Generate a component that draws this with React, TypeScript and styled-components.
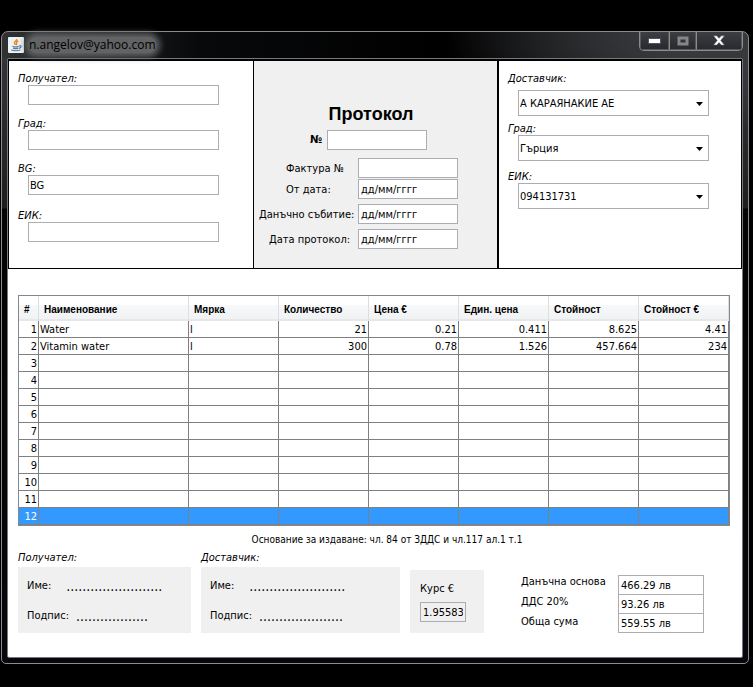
import React from "react";
import styled, { createGlobalStyle, css } from "styled-components";

const Global = createGlobalStyle`
  *, *::before, *::after { box-sizing: border-box; }
  body {
    margin: 0;
    background: #000;
    color: #000;
    font: 11px/14px "DejaVu Sans Condensed", "Noto Sans", sans-serif;
  }
  input, select, button { font: inherit; color: inherit; margin: 0; }
`;

const Desktop = styled.main`
  min-height: 100vh;
  padding: 31px 4px 20px 1px;
  background: #000;
`;

const Frame = styled.section`
  border: 1px solid #8c8c8c;
  border-radius: 7px 7px 5px 5px;
  padding: 0 5px 5px;
  background:
    radial-gradient(ellipse 300px 100px at 100% 0, #38393c 30%, transparent 100%),
    linear-gradient(90deg, #303133 0, #08090b 200px, #000 440px, #17181a 600px, #303133 100%) top / 100% 26px no-repeat,
    linear-gradient(#37383b 0, #1d1e20 176px, #030405 177px, #05070a 100%);
`;

const TitleBar = styled.header`
  display: flex;
  justify-content: space-between;
  height: 26px;
  padding-left: 1px;
`;

const Caption = styled.h1`
  display: flex;
  align-items: center;
  gap: 5px;
  margin: 0;
  font: 12px/16px "Open Sans", sans-serif;
`;

const CaptionText = styled.span`
  border-radius: 8px;
  background: #626364;
  box-shadow: 0 0 6px 4px #626364;
`;

const WindowButtons = styled.div`
  display: flex;
  height: 19px;
  border: 1px solid #8b8c8e;
  border-top: 0;
  border-radius: 0 0 5px 5px;
  overflow: hidden;
`;

const WindowButton = styled.button<{ $width: number }>`
  display: grid;
  place-items: center;
  width: ${(p) => p.$width}px;
  padding: 0;
  border: 1px solid #56585b;
  border-top: 0;
  background: linear-gradient(#3d3e41, #292a2d);
  & + & { border-left-color: #8b8c8e; }
`;

const Client = styled.div`
  border: 1px solid #77787a;
  border-radius: 2px;
  background: #fff;
  padding-bottom: 24px;
`;

const Panels = styled.div`
  display: grid;
  grid-template-columns: 244fr 246fr 242fr;
  border: solid #000;
  border-width: 2px 1px 1px;
`;

const Panel = styled.section<{ $shaded?: boolean }>`
  min-height: 207px;
  padding: 10px 9px;
  ${(p) =>
    p.$shaded &&
    css`
      padding: 42px 0 0;
      background: #f0f0f0;
      border: solid #000;
      border-width: 0 2px 0 1px;
    `}
`;

const Field = styled.div<{ $before?: number }>`
  margin-top: ${(p) => p.$before ?? 0}px;
`;

const ItalicLabel = styled.label<{ $after?: number }>`
  display: block;
  height: 14px;
  line-height: 16px;
  margin-bottom: ${(p) => p.$after ?? 0}px;
  font-style: italic;
`;

const box = css`
  border: 1px solid #abadb3;
  border-radius: 0;
  background: #fff;
  outline: none;
`;

const TextBox = styled.input`
  ${box}
  height: 20px;
  width: 100px;
  padding: 0 2px;
`;

const WideTextBox = styled(TextBox)`
  display: block;
  width: 191px;
  max-width: calc(100% - 10px);
  margin-left: 10px;
  padding: 0 1px;
`;

const SelectWrap = styled.div`
  position: relative;
  width: 191px;
  max-width: calc(100% - 10px);
  margin-left: 10px;
`;

const Select = styled.select`
  ${box}
  display: block;
  appearance: none;
  width: 100%;
  height: 26px;
  padding: 1px 20px 0 1px;
`;

const Arrow = styled.svg`
  position: absolute;
  right: 6px;
  top: 12px;
  pointer-events: none;
`;

const Title = styled.h2`
  margin: 0 0 5px;
  padding-right: 9px;
  text-align: center;
  font: bold 18px/22px "Liberation Sans", sans-serif;
`;

const NumberRow = styled.div`
  display: flex;
  align-items: center;
  gap: 5px;
  padding-left: 56px;
  margin-bottom: 8px;
  font-weight: bold;
`;

const DateRow = styled.div<{ $indent: number; $after: number }>`
  display: grid;
  grid-template-columns: ${(p) => 104 - p.$indent}px 100px;
  align-items: center;
  padding-left: ${(p) => p.$indent}px;
  margin-bottom: ${(p) => p.$after}px;
  white-space: nowrap;
  label { padding-top: 2px; }
`;

const Body = styled.div`
  padding: 26px 12px 0 10px;
`;

const Table = styled.table`
  width: 100%;
  table-layout: fixed;
  border-collapse: separate;
  border-spacing: 0;
  border: 1px solid #828790;
`;

const HeadCell = styled.th`
  height: 25px;
  padding: 4px 0 0 5px;
  text-align: left;
  font: bold 10px/14px "Liberation Sans", sans-serif;
  white-space: nowrap;
  border-right: 1px solid #dddee0;
  border-bottom: 2px solid #e6e7e9;
  background: linear-gradient(#fff 0 40%, #f7f8fa 41%, #f1f2f4 100%);
`;

const Cell = styled.td<{ $right?: boolean }>`
  height: 17px;
  padding: 2px 1px 0;
  line-height: 14px;
  text-align: ${(p) => (p.$right ? "right" : "left")};
  border: solid #808080;
  border-width: 0 1px 1px 0;
`;

const Row = styled.tr<{ $selected: boolean }>`
  ${(p) => p.$selected && "background: #3399ff; color: #fff;"}
`;

const Note = styled.p`
  margin: 7px 0 4px;
  padding-left: 26px;
  text-align: center;
  font-size: 10px;
`;

const Footer = styled.div`
  display: flex;
  align-items: flex-end;
  gap: 10px;
`;

const Signature = styled.section<{ $grow: number }>`
  flex: ${(p) => p.$grow} 1 0;
`;

const SignatureTitle = styled.h3`
  margin: 0 0 2px;
  font: inherit;
  font-style: italic;
`;

const SignatureBox = styled.div`
  display: grid;
  gap: 16px;
  padding: 12px 9px 10px;
  background: #f0f0f0;
`;

const SignatureLine = styled.div<{ $gap: number }>`
  display: flex;
  gap: ${(p) => p.$gap}px;
`;

const Dots = styled.span`
  font-size: 14px;
  line-height: 14px;
`;

const Rate = styled.div`
  width: 74px;
  padding: 12px 10px 11px;
  background: #f0f0f0;
`;

const RateBox = styled(TextBox)`
  display: block;
  width: 46px;
  margin-top: 6px;
  background: #f0f0f0;
`;

const Totals = styled.div`
  display: flex;
  gap: 13px;
  margin: 0 26px 0 27px;
`;

const TotalLabels = styled.div`
  display: grid;
  align-content: start;
  gap: 6px;
  width: 84px;
  white-space: nowrap;
`;

const TotalBoxes = styled.div`
  display: grid;
`;

const TotalBox = styled(TextBox)`
  width: 86px;
  & + & { height: 19px; border-top: 0; }
`;

const columns = ["#", "Наименование", "Мярка", "Количество", "Цена €", "Един. цена", "Стойност", "Стойност €"];
const items = [
  ["Water", "l", "21", "0.21", "0.411", "8.625", "4.41"],
  ["Vitamin water", "l", "300", "0.78", "1.526", "457.664", "234"],
];
const blank = ["", "", "", "", "", "", ""];
const rows = Array.from({ length: 12 }, (_, i) => items[i] ?? blank);

const recipient = [
  { id: "r-name", label: "Получател:", value: "", before: 0 },
  { id: "r-city", label: "Град:", value: "", before: 11 },
  { id: "r-bg", label: "BG:", value: "BG", before: 11 },
  { id: "r-eik", label: "ЕИК:", value: "", before: 13 },
];
const supplier = [
  { id: "s-name", label: "Доставчик:", value: "А КАРАЯНАКИЕ АЕ", before: 0, after: 5 },
  { id: "s-city", label: "Град:", value: "Гърция", before: 5, after: 0 },
  { id: "s-eik", label: "ЕИК:", value: "094131731", before: 8, after: 0 },
];
const dates = [
  { id: "d-invoice", label: "Фактура №", value: "", indent: 32, after: 1 },
  { id: "d-from", label: "От дата:", value: "дд/мм/гггг", indent: 32, after: 5 },
  { id: "d-event", label: "Данъчно събитие:", value: "дд/мм/гггг", indent: 5, after: 5 },
  { id: "d-protocol", label: "Дата протокол:", value: "дд/мм/гггг", indent: 15, after: 0 },
];
const totals = [
  { id: "t-base", label: "Данъчна основа", value: "466.29 лв" },
  { id: "t-vat", label: "ДДС 20%", value: "93.26 лв" },
  { id: "t-sum", label: "Обща сума", value: "559.55 лв" },
];
const signatures = [
  { title: "Получател:", grow: 173, name: 24, sign: 18 },
  { title: "Доставчик:", grow: 199, name: 24, sign: 21 },
];

function JavaIcon() {
  return (
    <svg width="16" height="16" viewBox="0 0 16 16" fill="none" aria-hidden="true">
      <rect width="16" height="16" rx="1" fill="#eef2f5" />
      <path d="M8.6 2C9.6 3.6 5.8 4.4 6.4 6 6.7 6.8 7.4 7.2 7.4 8M10.4 4C8.8 4.5 7.9 5.2 8.7 6.3 9 6.9 8.6 7.5 8.2 7.9" stroke="#ee8322" strokeWidth="1.4" />
      <path d="M4.4 9.3c1.8.7 4.6.7 6.4 0M5 11.1c1.7.6 3.6.6 5.2 0M3.2 13c2.2 1 7 1 9.2 0M11.2 8.8c2.6-.6 2.4 2-.4 2.6" stroke="#557f9e" strokeWidth="1.2" />
    </svg>
  );
}

export default function App() {
  return (
    <Desktop>
      <Global />
      <Frame>
        <TitleBar>
          <Caption>
            <JavaIcon />
            <CaptionText>n.angelov@yahoo.com</CaptionText>
          </Caption>
          <WindowButtons>
            <WindowButton $width={29} aria-label="Minimize">
              <svg width="13" height="6"><rect x="0.5" y="0.5" width="12" height="5" fill="#fff" stroke="#50546a" /></svg>
            </WindowButton>
            <WindowButton $width={27} aria-label="Maximize">
              <svg width="12" height="10"><rect x="2" y="2" width="8" height="6" fill="none" stroke="#858688" strokeWidth="3" /></svg>
            </WindowButton>
            <WindowButton $width={46} aria-label="Close">
              <svg width="12" height="11" viewBox="0 0 12 11">
                <path d="M.5.8h3.3L6 3.3 8.2.8h3.3L7.8 5.4l3.7 4.7H8.2L6 7.6 3.8 10.1H.5l3.7-4.7z" fill="#fff" stroke="#50546a" strokeWidth=".6" />
              </svg>
            </WindowButton>
          </WindowButtons>
        </TitleBar>
        <Client>
          <Panels>
            <Panel>
              {recipient.map((f) => (
                <Field key={f.id} $before={f.before}>
                  <ItalicLabel htmlFor={f.id}>{f.label}</ItalicLabel>
                  <WideTextBox id={f.id} defaultValue={f.value} />
                </Field>
              ))}
            </Panel>
            <Panel $shaded>
              <Title>Протокол</Title>
              <NumberRow>
                <label htmlFor="number">№</label>
                <TextBox id="number" />
              </NumberRow>
              {dates.map((d) => (
                <DateRow key={d.id} $indent={d.indent} $after={d.after}>
                  <label htmlFor={d.id}>{d.label}</label>
                  <TextBox id={d.id} defaultValue={d.value} />
                </DateRow>
              ))}
            </Panel>
            <Panel>
              {supplier.map((f) => (
                <Field key={f.id} $before={f.before}>
                  <ItalicLabel htmlFor={f.id} $after={f.after}>{f.label}</ItalicLabel>
                  <SelectWrap>
                    <Select id={f.id}><option>{f.value}</option></Select>
                    <Arrow width="7" height="4" aria-hidden="true"><path d="M0 0h7L3.5 4z" /></Arrow>
                  </SelectWrap>
                </Field>
              ))}
            </Panel>
          </Panels>
          <Body>
            <Table>
              <colgroup>
                <col width="20" />
                <col />
                {columns.slice(2).map((c) => <col key={c} width="90" />)}
              </colgroup>
              <thead>
                <tr>{columns.map((c) => <HeadCell key={c} scope="col">{c}</HeadCell>)}</tr>
              </thead>
              <tbody>
                {rows.map((r, i) => (
                  <Row key={i} $selected={i === 11}>
                    <Cell $right>{i + 1}</Cell>
                    {r.map((v, j) => <Cell key={j} $right={j > 1}>{v}</Cell>)}
                  </Row>
                ))}
              </tbody>
            </Table>
            <Note>Основание за издаване: чл. 84 от ЗДДС и чл.117 ал.1 т.1</Note>
            <Footer>
              {signatures.map((s) => (
                <Signature key={s.title} $grow={s.grow}>
                  <SignatureTitle>{s.title}</SignatureTitle>
                  <SignatureBox>
                    <SignatureLine $gap={15}><span>Име:</span><Dots>{".".repeat(s.name)}</Dots></SignatureLine>
                    <SignatureLine $gap={7}><span>Подпис:</span><Dots>{".".repeat(s.sign)}</Dots></SignatureLine>
                  </SignatureBox>
                </Signature>
              ))}
              <Rate>
                <label htmlFor="rate">Курс €</label>
                <RateBox id="rate" defaultValue="1.95583" readOnly />
              </Rate>
              <Totals>
                <TotalLabels>
                  {totals.map((t) => <label key={t.id} htmlFor={t.id}>{t.label}</label>)}
                </TotalLabels>
                <TotalBoxes>
                  {totals.map((t) => <TotalBox key={t.id} id={t.id} defaultValue={t.value} />)}
                </TotalBoxes>
              </Totals>
            </Footer>
          </Body>
        </Client>
      </Frame>
    </Desktop>
  );
}
